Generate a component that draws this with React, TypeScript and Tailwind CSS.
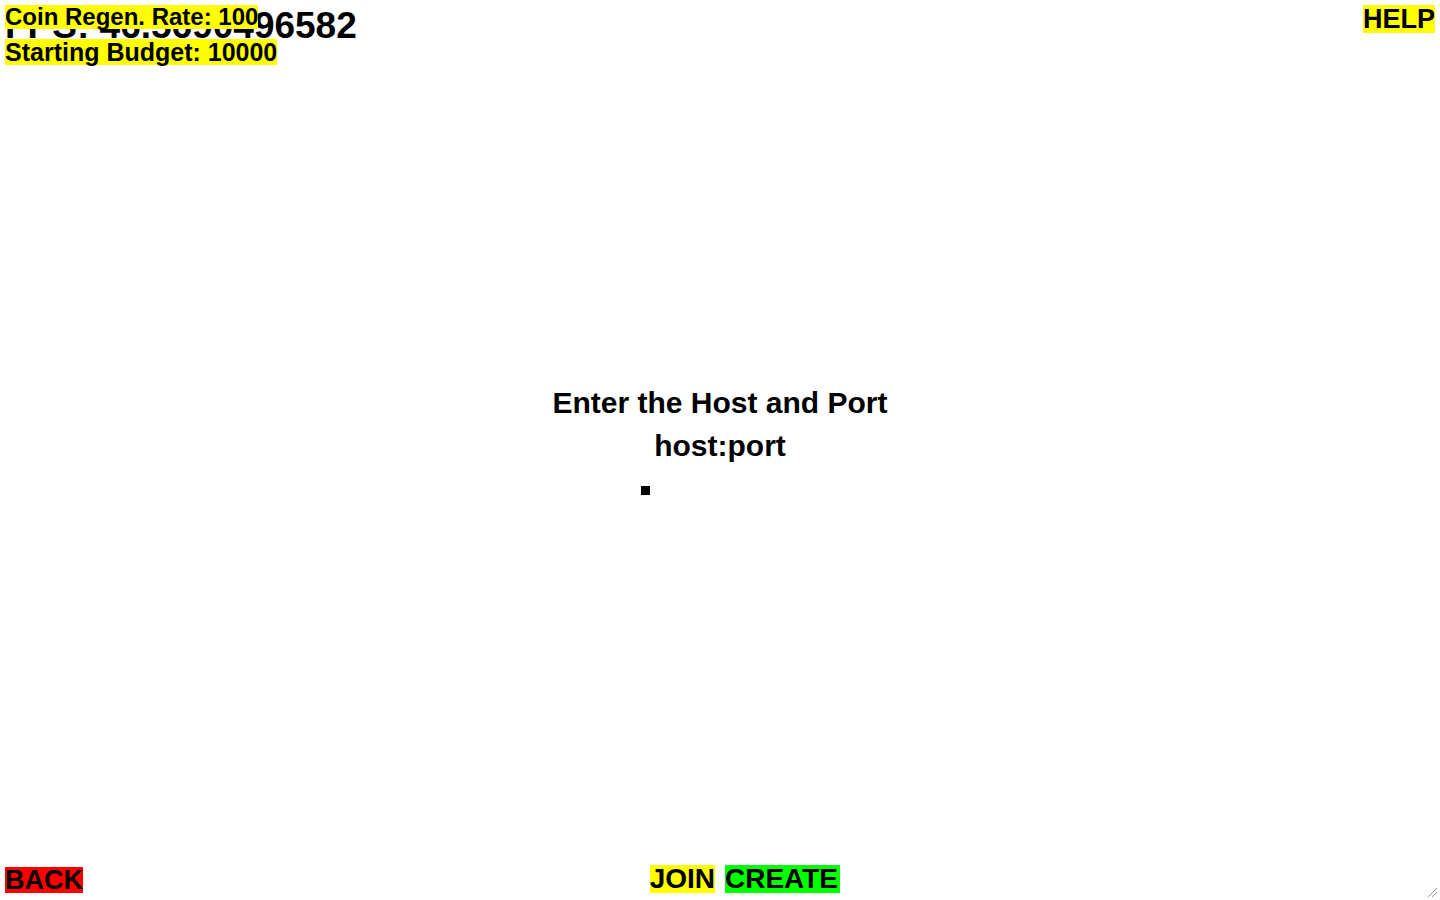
import React from 'react';

const font = { fontFamily: '"Liberation Sans", Arial, sans-serif' };

const Label = ({ text, className }: { text: string; className: string }) => (
  <span className={`inline-block font-bold text-black whitespace-nowrap ${className}`}>{text}</span>
);

const App = () => {
  return (
    <div className="relative w-full h-screen bg-white flex flex-col overflow-hidden" style={font}>
      {/* fps counter sits underneath the stat labels */}
      <div className="absolute left-[5px] top-[7px] text-[37px] leading-[37px] font-bold text-black whitespace-nowrap">
        FPS: 46.5690496582
      </div>

      <header className="relative flex justify-between items-start px-[5px] pt-[5px]">
        <div className="flex flex-col items-start">
          <Label text="Coin Regen. Rate: 100" className="bg-[#ffff00] text-[24px] leading-[24px] h-[24px]" />
          <Label text="Starting Budget: 10000" className="bg-[#ffff00] text-[25px] leading-[26px] h-[26px] mt-[10px]" />
        </div>
        <Label text="HELP" className="bg-[#ffff00] text-[27px] leading-[28px] h-[28px]" />
      </header>

      <main className="flex flex-col items-center pt-[316px] font-bold text-black">
        <div className="text-[30px] leading-[43px] whitespace-nowrap">Enter the Host and Port</div>
        <div className="text-[30px] leading-[43px] whitespace-nowrap">host:port</div>
        <div className="w-[158px] mt-[19px]">
          <div className="w-[9px] h-[9px] bg-black" />
        </div>
      </main>

      <footer className="mt-auto grid grid-cols-2 pb-[7px]">
        <div className="flex justify-between items-end pl-[5px] pr-[5px]">
          <Label text="BACK" className="bg-[#ff0000] text-[27px] leading-[26px] h-[26px]" />
          <Label text="JOIN" className="bg-[#ffff00] text-[28px] leading-[28px] h-[28px]" />
        </div>
        <div className="flex items-end pl-[5px]">
          <Label text="CREATE" className="bg-[#00ff00] text-[28px] leading-[28px] h-[28px] pr-[2px]" />
        </div>
      </footer>

      {/* resize grip */}
      <svg className="absolute right-[2px] bottom-[2px]" width="11" height="11" viewBox="0 0 11 11">
        <line x1="10" y1="1" x2="1" y2="10" stroke="#9a9a9a" strokeWidth="1" />
        <line x1="10" y1="5" x2="5" y2="10" stroke="#9a9a9a" strokeWidth="1" />
      </svg>
    </div>
  );
};

export default App;
